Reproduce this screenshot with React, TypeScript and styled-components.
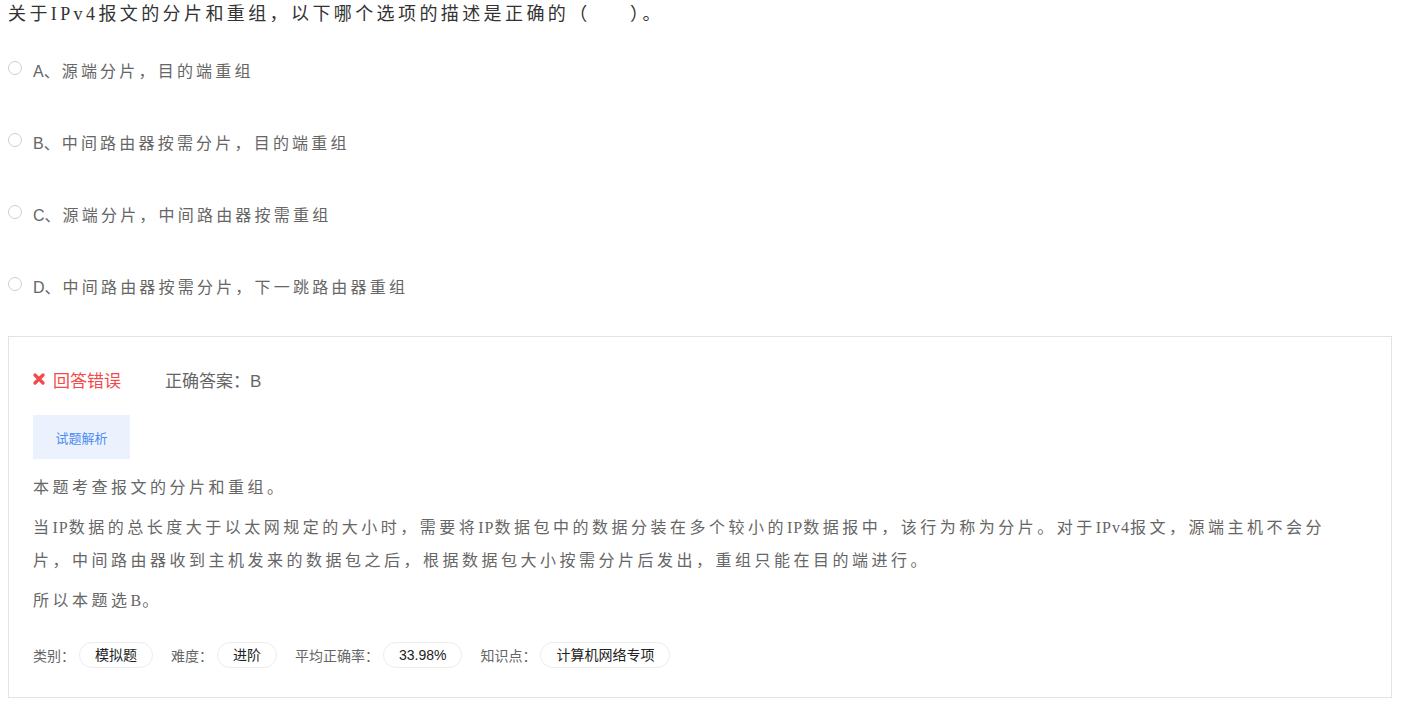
import React from "react"
import styled, { createGlobalStyle } from "styled-components"

const GlobalStyle = createGlobalStyle`
  body {
    margin: 0;
    background: #fff;
  }
`

const serif = `"Liberation Serif", "Noto Sans CJK SC", serif`
const sans = `"Liberation Sans", "Noto Sans CJK SC", sans-serif`

const Page = styled.div`
  padding: 0 16px 0 8px;
  width: 1384px;
`

const Question = styled.div`
  font-family: ${serif};
  font-size: 18px;
  line-height: 28px;
  letter-spacing: 3.4px;
  color: #333;
  white-space: pre;
`

const OptionList = styled.div`
  display: flex;
  flex-direction: column;
  gap: 40px;
  margin-top: 26px;
`

const OptionRow = styled.label`
  display: flex;
  align-items: center;
  height: 32px;
  font-family: ${sans};
  font-size: 16px;
  letter-spacing: 3.2px;
  color: #666;
  cursor: pointer;
`

const OptionKey = styled.span`
  letter-spacing: 0;
  margin-right: 2px;
`

const Radio = styled.span`
  width: 12px;
  height: 12px;
  border: 1px solid #cfcfcf;
  border-radius: 50%;
  background: #fff;
  margin: 0 11px 5px 0;
  flex-shrink: 0;
`

const AnswerBox = styled.div`
  margin-top: 34px;
  border: 1px solid #e3e3e3;
  padding: 30px 24px 29px 24px;
`

const ResultRow = styled.div`
  display: flex;
  align-items: center;
  height: 24px;
  font-family: ${sans};
  font-size: 17px;
`

const Wrong = styled.span`
  display: flex;
  align-items: center;
  gap: 8px;
  color: #f5484b;
`

const RightAnswer = styled.span`
  margin-left: 44px;
  color: #666;
`

const Tab = styled.div`
  margin-top: 24px;
  width: 97px;
  height: 44px;
  display: flex;
  align-items: center;
  justify-content: center;
  background: #ebf2fe;
  color: #4d8cf0;
  font-family: ${sans};
  font-size: 13px;
`

const Analysis = styled.div`
  margin-top: 12px;
  max-width: 1308px;
  display: flex;
  flex-direction: column;
  gap: 7px;
`

const Para = styled.p`
  margin: 0;
  font-family: ${serif};
  font-size: 16px;
  line-height: 33px;
  letter-spacing: 3.5px;
  color: #666;
`

const Latin = styled.span`
  letter-spacing: 1px;
`

const Meta = styled.div`
  margin-top: 25px;
  display: flex;
  align-items: center;
  gap: 18px;
  font-family: ${sans};
  font-size: 14px;
`

const MetaItem = styled.div`
  display: flex;
  align-items: center;
  gap: 4px;
`

const MetaLabel = styled.span`
  color: #666;
`

const Pill = styled.span`
  height: 24px;
  line-height: 24px;
  padding: 0 15px;
  border: 1px solid #ececec;
  border-radius: 13px;
  color: #222;
`

const CrossIcon = () => (
  <svg width="12" height="12" viewBox="0 0 12 12">
    <path d="M2 2 L10 10 M10 2 L2 10" stroke="#f5484b" strokeWidth="3.2" strokeLinecap="round" />
  </svg>
)

const options = [
  { key: "A、", text: "源端分片，目的端重组" },
  { key: "B、", text: "中间路由器按需分片，目的端重组" },
  { key: "C、", text: "源端分片，中间路由器按需重组" },
  { key: "D、", text: "中间路由器按需分片，下一跳路由器重组" },
]

const meta = [
  { label: "类别：", value: "模拟题" },
  { label: "难度：", value: "进阶" },
  { label: "平均正确率：", value: "33.98%" },
  { label: "知识点：", value: "计算机网络专项" },
]

export default function App() {
  return (
    <Page>
      <GlobalStyle />
      <Question>关于IPv4报文的分片和重组，以下哪个选项的描述是正确的（{"\u00a0\u00a0\u00a0\u00a0\u00a0"}）。</Question>
      <OptionList>
        {options.map((opt) => (
          <OptionRow key={opt.key}>
            <Radio />
            <OptionKey>{opt.key}</OptionKey>
            {opt.text}
          </OptionRow>
        ))}
      </OptionList>
      <AnswerBox>
        <ResultRow>
          <Wrong>
            <CrossIcon />
            回答错误
          </Wrong>
          <RightAnswer>正确答案：B</RightAnswer>
        </ResultRow>
        <Tab>试题解析</Tab>
        <Analysis>
          <Para>本题考查报文的分片和重组。</Para>
          <Para>
            当<Latin>IP</Latin>数据的总长度大于以太网规定的大小时，需要将<Latin>IP</Latin>数据包中的数据分装在多个较小的<Latin>IP</Latin>数据报中，该行为称为分片。对于<Latin>IPv4</Latin>报文，源端主机不会分片，中间路由器收到主机发来的数据包之后，根据数据包大小按需分片后发出，重组只能在目的端进行。
          </Para>
          <Para>所以本题选<Latin>B</Latin>。</Para>
        </Analysis>
        <Meta>
          {meta.map((m) => (
            <MetaItem key={m.label}>
              <MetaLabel>{m.label}</MetaLabel>
              <Pill>{m.value}</Pill>
            </MetaItem>
          ))}
        </Meta>
      </AnswerBox>
    </Page>
  )
}
